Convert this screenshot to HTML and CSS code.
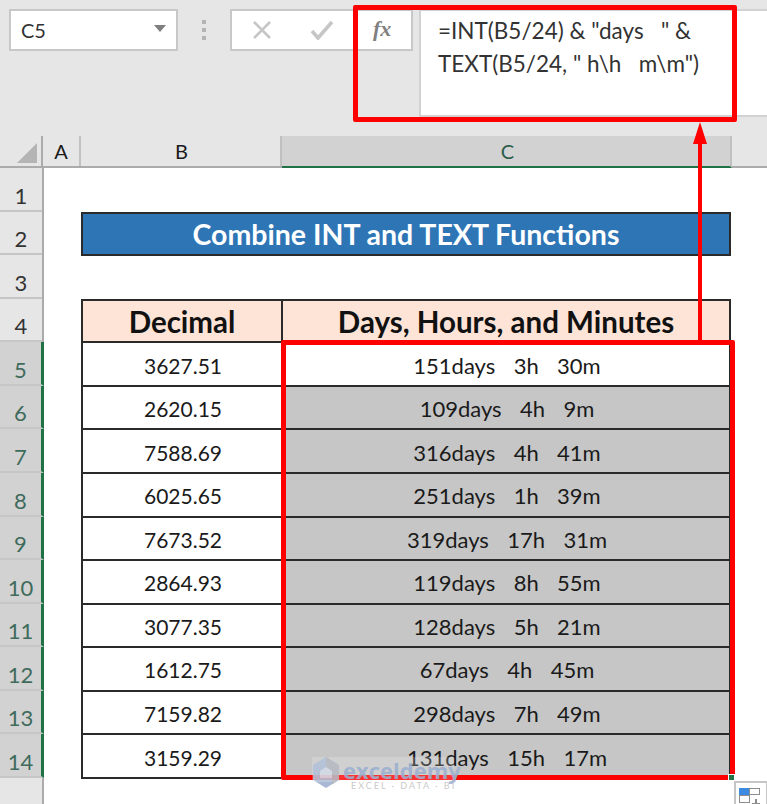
FILE: index.html
```html
<!DOCTYPE html>
<html lang="en">
<head>
    <meta charset="UTF-8">
    <title>Combine INT and TEXT Functions</title>
    <link rel="stylesheet" href="styles.css">
</head>
<body>

<div class="page">
    <!-- Formula bar -->
    <div class="formula-bar">
        <div class="name-box">
            <span>C5</span>
            <svg class="name-arrow" width="12" height="7" viewBox="0 0 12 7"><path d="M0 0h12L6 7z" fill="#7f7f7f"/></svg>
        </div>
        <div class="dots"><i></i><i></i><i></i></div>
        <div class="fx-box">
            <svg class="icon-x" width="20" height="20" viewBox="0 0 20 20"><path d="M2 2l16 16M18 2L2 18" stroke="#c6c6c6" stroke-width="2.6" fill="none"/></svg>
            <svg class="icon-check" width="24" height="20" viewBox="0 0 24 20"><path d="M2 11l6 7L22 2" stroke="#c6c6c6" stroke-width="3.6" fill="none"/></svg>
            <span class="fx">fx</span>
        </div>
        <div class="formula-text">=INT(B5/24) &amp; "days   " &amp;
TEXT(B5/24, " h\h   m\m")</div>
    </div>

    <!-- Column headers -->
    <div class="col-headers">
        <div class="corner"><svg width="20" height="20" viewBox="0 0 20 20"><path d="M20 0v20H0z" fill="#b4b4b4"/></svg></div>
        <div class="col-head col-a">A</div>
        <div class="col-head col-b">B</div>
        <div class="col-head col-c">C</div>
    </div>

    <div class="sheet">
        <!-- Row headers -->
        <div class="row-headers">
            <div class="row-head">1</div>
            <div class="row-head">2</div>
            <div class="row-head">3</div>
            <div class="row-head">4</div>
            <div class="row-head selected">5</div>
            <div class="row-head selected">6</div>
            <div class="row-head selected">7</div>
            <div class="row-head selected">8</div>
            <div class="row-head selected">9</div>
            <div class="row-head selected">10</div>
            <div class="row-head selected">11</div>
            <div class="row-head selected">12</div>
            <div class="row-head selected">13</div>
            <div class="row-head selected">14</div>
        </div>

        <!-- Cells -->
        <div class="cells">
            <div class="blank"></div>
            <div class="title">Combine INT and TEXT Functions</div>
            <div class="blank"></div>
            <div class="cell head head-b">Decimal</div>
            <div class="cell head">Days, Hours, and Minutes</div>

            <div class="cell num">3627.51</div><div class="cell val first">151days   3h   30m</div>
            <div class="cell num">2620.15</div><div class="cell val">109days   4h   9m</div>
            <div class="cell num">7588.69</div><div class="cell val">316days   4h   41m</div>
            <div class="cell num">6025.65</div><div class="cell val">251days   1h   39m</div>
            <div class="cell num">7673.52</div><div class="cell val">319days   17h   31m</div>
            <div class="cell num">2864.93</div><div class="cell val">119days   8h   55m</div>
            <div class="cell num">3077.35</div><div class="cell val">128days   5h   21m</div>
            <div class="cell num">1612.75</div><div class="cell val">67days   4h   45m</div>
            <div class="cell num">7159.82</div><div class="cell val">298days   7h   49m</div>
            <div class="cell num">3159.29</div><div class="cell val">131days   15h   17m</div>
        </div>
    </div>

    <!-- Red annotations -->
    <div class="mark mark-formula"></div>
    <div class="mark mark-range"></div>
    <svg class="arrow" width="20" height="222" viewBox="0 0 20 222">
        <path d="M10 10V222" stroke="#ff0000" stroke-width="4" fill="none"/>
        <path d="M10 0L17 22H3z" fill="#ff0000"/>
    </svg>

    <!-- Watermark -->
    <div class="watermark">
        <svg width="28" height="31" viewBox="0 0 28 31">
            <path d="M14 0l13 8v15l-13 8-13-8V8z" fill="#9fb1d0"/>
            <path d="M14 0l13 8v15l-7 4V14l-6-4z" fill="#a5a9b2"/>
            <path d="M14 10l6 4v7h-12v-7z" fill="#c9d2e2"/>
        </svg>
        <div class="wm-text">
            <span class="wm-name">exceldemy</span>
            <span class="wm-sub">EXCEL · DATA · BI</span>
        </div>
    </div>

    <!-- Fill handle and quick analysis -->
    <div class="handle"></div>
    <div class="quick">
        <svg width="24" height="24" viewBox="0 0 24 24">
            <rect x="2" y="3" width="10" height="7" fill="#3d8be0"/>
            <rect x="12.5" y="3.5" width="10" height="6" fill="#fff" stroke="#8c8c8c"/>
            <rect x="2.5" y="10.5" width="10" height="7" fill="#fff" stroke="#8c8c8c"/>
            <path d="M19 14v8M15 19h8" stroke="#8c8c8c" stroke-width="2"/>
        </svg>
    </div>
</div>

</body>
</html>
```
FILE: styles.css
```css
* {
    box-sizing: border-box;
}
html, body {
    margin: 0;
    background-color: #fff;
}
body {
    font-family: Lato, "Open Sans", sans-serif;
    color: #1a1a1a;
}
.page {
    position: relative;
    width: 767px;
    height: 804px;
    overflow: hidden;
}
/* Formula bar */
.formula-bar {
    height: 136px;
    background-color: #e6e6e6;
    display: flex;
    align-items: flex-start;
    padding-top: 9px;
    padding-left: 9px;
}
.name-box {
    width: 169px;
    height: 42px;
    background-color: #fff;
    border: 2px solid #c8c8c8;
    display: flex;
    align-items: center;
    justify-content: space-between;
    padding: 0 10px;
    font-size: 20px;
    color: #333;
}
.name-arrow {
    margin-top: -4px;
}
.dots {
    width: 52px;
    height: 42px;
    display: flex;
    flex-direction: column;
    align-items: center;
    justify-content: center;
    gap: 4px;
}
.dots i {
    width: 4px;
    height: 4px;
    background-color: #b4b4b4;
}
.fx-box {
    width: 183px;
    height: 42px;
    background-color: #fff;
    border: 2px solid #c8c8c8;
    display: flex;
    align-items: center;
    padding-left: 20px;
}
.icon-check {
    margin-left: 38px;
}
.fx {
    font-family: "Liberation Serif", serif;
    font-style: italic;
    font-weight: bold;
    font-size: 22px;
    color: #808080;
    margin-left: 39px;
    margin-top: -3px;
}
.formula-text {
    flex: 1;
    height: 108px;
    margin-left: 6px;
    background-color: #fff;
    border: 2px solid #d2d2d2;
    border-right: 0;
    padding: 3px 0 0 17px;
    font-size: 22.5px;
    line-height: 33px;
    white-space: pre;
    color: #333;
}
/* Column headers */
.col-headers {
    height: 32px;
    display: flex;
    background-color: #e6e6e6;
    border-bottom: 2px solid #ababab;
}
.corner {
    width: 43px;
    border-right: 2px solid #ababab;
    padding: 7px 0 0 17px;
}
.col-head {
    display: flex;
    align-items: center;
    justify-content: center;
    font-size: 20px;
    border-right: 2px solid #c0c0c0;
}
.col-a {
    width: 38px;
}
.col-b {
    width: 201px;
    padding-left: 2px;
}
.col-c {
    width: 450px;
    padding-left: 3px;
    background-color: #d2d2d2;
    border-bottom: 2px solid #217346;
    margin-bottom: -2px;
    color: #2b5d4a;
}
/* Sheet */
.sheet {
    display: flex;
}
.row-headers {
    width: 44px;
    height: 636px;
    background-color: #e6e6e6;
    border-right: 2px solid #ababab;
}
.row-head {
    height: 43.57px;
    display: flex;
    align-items: flex-end;
    justify-content: center;
    padding-bottom: 1px;
    font-size: 22px;
    color: #333;
    border-bottom: 2px solid #c6c6c6;
}
.row-head.selected {
    background-color: #d2d2d2;
    margin-right: -2px;
    border-right: 3px solid #217346;
    color: #3f6b5c;
}
.cells {
    display: grid;
    grid-template-columns: 202px 448px;
    grid-template-rows: repeat(14, 43.57px);
    margin-left: 37px;
    padding-top: 1px;
}
.blank {
    grid-column: 1 / 3;
}
.title {
    grid-column: 1 / 3;
    margin-top: -1px;
    background-color: #2e75b6;
    border: 2px solid #2a2a2a;
    color: #fff;
    font-weight: bold;
    font-size: 28.5px;
    display: flex;
    align-items: center;
    justify-content: center;
}
.cell {
    display: flex;
    align-items: center;
    justify-content: center;
    white-space: pre;
    font-size: 21px;
    border-bottom: 2px solid #2a2a2a;
    border-right: 2px solid #2a2a2a;
    padding-top: 2px;
}
.num {
    border-left: 2px solid #2a2a2a;
    padding-left: 2px;
}
.head {
    margin-top: -1px;
    background-color: #fde4d6;
    font-weight: bold;
    font-size: 29.5px;
    color: #111;
    border-top: 2px solid #2a2a2a;
    padding-top: 1px;
}
.head-b {
    border-left: 2px solid #2a2a2a;
}
.val {
    background-color: #c6c6c6;
    font-size: 22px;
    word-spacing: 0.5px;
    padding-left: 2px;
}
.val.first {
    background-color: #fff;
}
/* Red annotations */
.mark {
    position: absolute;
    border: 5px solid #ff0000;
    border-radius: 2px;
}
.mark-formula {
    left: 353px;
    top: 5px;
    width: 384px;
    height: 117px;
}
.mark-range {
    left: 281px;
    top: 340px;
    width: 454px;
    height: 440px;
}
.arrow {
    position: absolute;
    left: 690px;
    top: 122px;
}
/* Watermark */
.watermark {
    position: absolute;
    left: 312px;
    top: 757px;
    display: flex;
    gap: 3px;
    opacity: 0.9;
}
.watermark::before {
    content: "";
    position: absolute;
    left: 0;
    top: 0;
    width: 142px;
    height: 25px;
    background-color: rgba(255, 255, 255, 0.22);
}
.wm-text {
    position: relative;
    display: flex;
    flex-direction: column;
    padding-top: 3px;
}
.wm-name {
    color: #9fb1d0;
    font-family: "Open Sans", sans-serif;
    font-weight: bold;
    font-size: 22px;
    line-height: 20px;
    height: 20px;
    padding-right: 1px;
}
.wm-sub {
    font-size: 9px;
    line-height: 9px;
    letter-spacing: 2px;
    color: #c4c4c4;
    padding-left: 8px;
    margin-top: 1px;
}
.handle {
    position: absolute;
    left: 728px;
    top: 774px;
    width: 7px;
    height: 7px;
    background-color: #217346;
    border: 1px solid #fff;
}
.quick {
    position: absolute;
    left: 734px;
    top: 781px;
    width: 34px;
    height: 30px;
    background-color: #fff;
    border: 2px solid #c6c6c6;
    padding: 2px 0 0 1px;
}
```
